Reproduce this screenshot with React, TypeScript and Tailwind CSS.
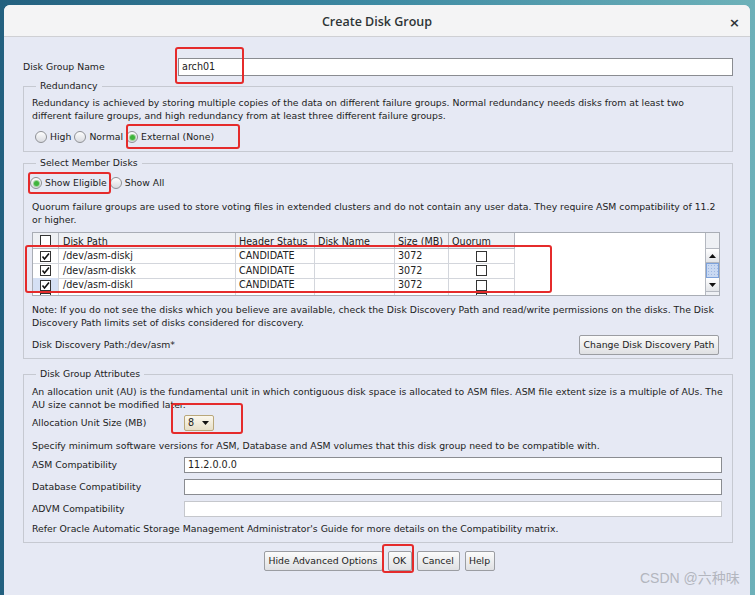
import React from 'react';

const ui = "font-['DejaVu_Sans',sans-serif] text-[9.3px] text-[#222]";

function Radio({ label, checked }: { label: string; checked?: boolean }) {
    return (
        <div className="flex items-center gap-[3px]">
            <span className="w-[12px] h-[12px] rounded-full border border-[#8f9196] bg-gradient-to-b from-[#fdfdfd] to-[#d9dbe0] flex items-center justify-center">
                {checked && <span className="w-[5px] h-[5px] rounded-full bg-[#3fb43c] ring-1 ring-[#9fd39b]" />}
            </span>
            <span className="leading-[12px]">{label}</span>
        </div>
    );
}

function Check({ on }: { on?: boolean }) {
    return (
        <span className="w-[11px] h-[11px] border border-[#333] bg-white flex items-center justify-center">
            {on && (
                <svg width="9" height="9" viewBox="0 0 9 9">
                    <path d="M1.5 4.5 L3.5 7 L8 1.5" stroke="#111" strokeWidth="1.6" fill="none" />
                </svg>
            )}
        </span>
    );
}

function Btn({ children, className }: { children: React.ReactNode; className?: string }) {
    return (
        <div className={"h-[20px] px-[5px] flex items-center justify-center rounded-[2px] border border-[#9b9da2] bg-gradient-to-b from-[#fbfbfb] to-[#dfe0e3] leading-[12px] whitespace-nowrap " + (className ?? '')}>
            {children}
        </div>
    );
}

function Group({ title, children, className }: { title: string; children: React.ReactNode; className?: string }) {
    return (
        <fieldset className={"border border-[#c6c9d1] px-[8px] " + (className ?? '')}>
            <legend className="ml-[4px] px-[4px] leading-[12px]">{title}</legend>
            {children}
        </fieldset>
    );
}

const disks = ['/dev/asm-diskj', '/dev/asm-diskk', '/dev/asm-diskl'];

function DiskTable() {
    const cols = 'grid grid-cols-[26px_177px_79px_80px_54px_66px_1fr]';
    return (
        <div className="mt-[6px] mr-[2px] h-[64px] border border-[#a9adb5] bg-white flex flex-col overflow-hidden text-[9.6px]">
            <div className="flex h-[16px] shrink-0">
                <div className={cols + ' flex-1 bg-[#eef0f4]'}>
                    <div className="border-r border-b border-[#b4b8c0] flex items-center justify-center"><Check /></div>
                    <div className="border-r border-b border-[#b4b8c0] pl-[4px] pt-[3px] leading-[12px]">Disk Path</div>
                    <div className="border-r border-b border-[#b4b8c0] pl-[3px] pt-[3px] leading-[12px] whitespace-nowrap overflow-hidden">Header Status</div>
                    <div className="border-r border-b border-[#b4b8c0] pl-[3px] pt-[3px] leading-[12px]">Disk Name</div>
                    <div className="border-r border-b border-[#b4b8c0] pl-[3px] pt-[3px] leading-[12px] whitespace-nowrap">Size (MB)</div>
                    <div className="border-r border-b border-[#b4b8c0] pl-[3px] pt-[3px] leading-[12px]">Quorum</div>
                    <div className="bg-white" />
                </div>
                <div className="w-[14px] bg-[#eef0f4] border-l border-b border-[#b4b8c0]" />
            </div>
            <div className="flex flex-1">
                <div className="flex-1 flex flex-col">
                    {disks.map((d, i) => (
                        <div key={d} className={cols + ' h-[14.5px] shrink-0'}>
                            <div className={'border-r border-b border-[#d3d6dc] flex items-center justify-center ' + (i === 2 ? 'bg-[#d5e0f4]' : '')}><Check on /></div>
                            <div className="border-r border-b border-[#d3d6dc] pl-[4px] leading-[14px]">{d}</div>
                            <div className="border-r border-b border-[#d3d6dc] pl-[3px] leading-[14px]">CANDIDATE</div>
                            <div className="border-r border-b border-[#d3d6dc]" />
                            <div className="border-r border-b border-[#d3d6dc] pl-[3px] leading-[14px]">3072</div>
                            <div className="border-r border-b border-[#d3d6dc] flex items-center justify-center"><Check /></div>
                            <div />
                        </div>
                    ))}
                    <div className={cols + ' flex-1'}>
                        <div className="border-r border-[#d3d6dc] flex justify-center"><span className="w-[11px] h-[3px] border-t border-x border-[#333]" /></div>
                        <div className="border-r border-[#d3d6dc]" />
                        <div className="border-r border-[#d3d6dc]" />
                        <div className="border-r border-[#d3d6dc]" />
                        <div className="border-r border-[#d3d6dc]" />
                        <div className="border-r border-[#d3d6dc] flex justify-center"><span className="w-[11px] h-[3px] border-t border-x border-[#333]" /></div>
                        <div />
                    </div>
                </div>
                <div className="w-[14px] flex flex-col bg-[#eef0f4] border-l border-[#b4b8c0]">
                    <div className="h-[14px] border-b border-[#b4b8c0] bg-gradient-to-b from-white to-[#e2e4e8] flex items-center justify-center">
                        <svg width="7" height="4" viewBox="0 0 7 4"><path d="M0 4 L3.5 0 L7 4 Z" fill="#111" /></svg>
                    </div>
                    <div className="h-[15px] border border-[#7da2db] bg-[#c9d9f2] bg-[radial-gradient(#9fb8e3_1px,transparent_1px)] bg-[length:3px_3px]" />
                    <div className="h-[14px] border-b border-[#b4b8c0] bg-gradient-to-b from-white to-[#e2e4e8] flex items-center justify-center">
                        <svg width="7" height="4" viewBox="0 0 7 4"><path d="M0 0 L3.5 4 L7 0 Z" fill="#111" /></svg>
                    </div>
                    <div className="flex-1" />
                </div>
            </div>
        </div>
    );
}

function Field({ label, value, dim }: { label: string; value?: string; dim?: boolean }) {
    return (
        <div className="flex items-center h-[16px] mt-[6px] first:mt-[4.5px] pr-[1px]">
            <span className="w-[152px] shrink-0">{label}</span>
            <div className={'flex-1 h-[16px] bg-white border px-[3px] leading-[14px] text-[9.6px] ' + (dim ? 'border-[#c5c7cc]' : 'border-[#8a8c91]')}>{value}</div>
        </div>
    );
}

const redBox = 'absolute border-2 border-[#e52b2b] rounded-[3px]';

export default function App() {
    return (
        <div className="relative w-[755px] h-[595px] overflow-hidden bg-gradient-to-r from-[#23607f] via-[#3d8aa3] to-[#6db1b9]">
            <div className={'ml-[4px] mt-[5px] w-[746px] h-[600px] rounded-t-[6px] overflow-hidden bg-[#e6e9f4] flex flex-col ' + ui}>
                <div className="h-[32px] shrink-0 bg-[#f4f4f5] border-b border-[#cfd0d4] grid grid-cols-[1fr_auto_1fr] items-center pt-[3px]">
                    <div />
                    <div className="font-['Open_Sans',sans-serif] font-semibold text-[12.5px] text-[#2e3436]">Create Disk Group</div>
                    <div className="justify-self-end pr-[10px] text-[13px] font-bold text-[#2e3436] font-['DejaVu_Sans',sans-serif] leading-none">×</div>
                </div>
                <div className="pl-[19px] pr-[17px] flex flex-col">
                    <div className="mt-[21px] h-[18px] flex items-center">
                        <span className="w-[155px] shrink-0">Disk Group Name</span>
                        <div className="flex-1 h-[18px] bg-white border border-[#8a8c91] px-[3px] leading-[16px] text-[9.6px]">arch01</div>
                    </div>

                    <Group title="Redundancy" className="mt-[4px] pb-[6px]">
                        <p className="pt-[4px] leading-[13px]">
                            Redundancy is achieved by storing multiple copies of the data on different failure groups. Normal redundancy needs disks from at least two
                            <br />
                            different failure groups, and high redundancy from at least three different failure groups.
                        </p>
                        <div className="mt-[7px] h-[16px] flex items-center gap-[3px] ml-[3px]">
                            <Radio label="High" />
                            <Radio label="Normal" />
                            <Radio label="External (None)" checked />
                        </div>
                    </Group>

                    <Group title="Select Member Disks" className="mt-[5px] pb-[3px] pr-[10px]">
                        <div className="mt-[6px] h-[16px] flex items-center gap-[3px] -ml-[2px]">
                            <Radio label="Show Eligible" checked />
                            <Radio label="Show All" />
                        </div>
                        <p className="mt-[9px] leading-[13px]">
                            Quorum failure groups are used to store voting files in extended clusters and do not contain any user data. They require ASM compatibility of 11.2
                            <br />
                            or higher.
                        </p>
                        <DiskTable />
                        <p className="mt-[7px] leading-[13px]">
                            Note: If you do not see the disks which you believe are available, check the Disk Discovery Path and read/write permissions on the disks. The Disk
                            <br />
                            Discovery Path limits set of disks considered for discovery.
                        </p>
                        <div className="mt-[6px] h-[20px] flex items-center justify-between pr-[3px]">
                            <span>Disk Discovery Path:/dev/asm*</span>
                            <Btn className="w-[140px]">Change Disk Discovery Path</Btn>
                        </div>
                    </Group>

                    <Group title="Disk Group Attributes" className="mt-[9px] pb-[7px] pr-[9px]">
                        <p className="pt-[5px] leading-[13px]">
                            An allocation unit (AU) is the fundamental unit in which contiguous disk space is allocated to ASM files. ASM file extent size is a multiple of AUs. The
                            <br />
                            AU size cannot be modified later.
                        </p>
                        <div className="mt-[4px] h-[16px] flex items-center">
                            <span className="w-[152px] shrink-0">Allocation Unit Size (MB)</span>
                            <div className="w-[30px] h-[16px] rounded-[2px] border border-[#b9a77a] bg-gradient-to-b from-[#fbf8ee] to-[#e6dfc9] flex items-center justify-between pl-[3px] pr-[4px] text-[9.6px]">
                                <span>8</span>
                                <svg width="7" height="4" viewBox="0 0 7 4"><path d="M0 0 L3.5 4 L7 0 Z" fill="#111" /></svg>
                            </div>
                        </div>
                        <p className="mt-[8px] leading-[13px]">Specify minimum software versions for ASM, Database and ASM volumes that this disk group need to be compatible with.</p>
                        <div className="flex flex-col">
                            <Field label="ASM Compatibility" value="11.2.0.0.0" />
                            <Field label="Database Compatibility" />
                            <Field label="ADVM Compatibility" dim />
                        </div>
                        <p className="mt-[5px] leading-[13px]">Refer Oracle Automatic Storage Management Administrator's Guide for more details on the Compatibility matrix.</p>
                    </Group>

                    <div className="mt-[8px] flex justify-center gap-[5px] -mr-[2px]">
                        <Btn className="w-[119px]">Hide Advanced Options</Btn>
                        <Btn className="w-[24px]">OK</Btn>
                        <Btn className="w-[43px]">Cancel</Btn>
                        <Btn className="w-[30px]">Help</Btn>
                    </div>
                </div>
            </div>

            <div className={redBox + ' left-[175px] top-[47px] w-[69px] h-[37px]'} />
            <div className={redBox + ' left-[126px] top-[124px] w-[114px] h-[25px]'} />
            <div className={redBox + ' left-[28px] top-[172px] w-[83px] h-[22px]'} />
            <div className={redBox + ' left-[25px] top-[245px] w-[527px] h-[48px]'} />
            <div className={redBox + ' left-[171px] top-[403px] w-[72px] h-[31px]'} />
            <div className={redBox + ' left-[382px] top-[544px] w-[32px] h-[29px]'} />

            <div className="absolute left-[640px] top-[570px] text-[14px] leading-[16px] text-[#b3b6be] font-['Liberation_Sans','Noto_Sans_CJK_SC',sans-serif]">
                CSDN @六种味
            </div>
        </div>
    );
}
